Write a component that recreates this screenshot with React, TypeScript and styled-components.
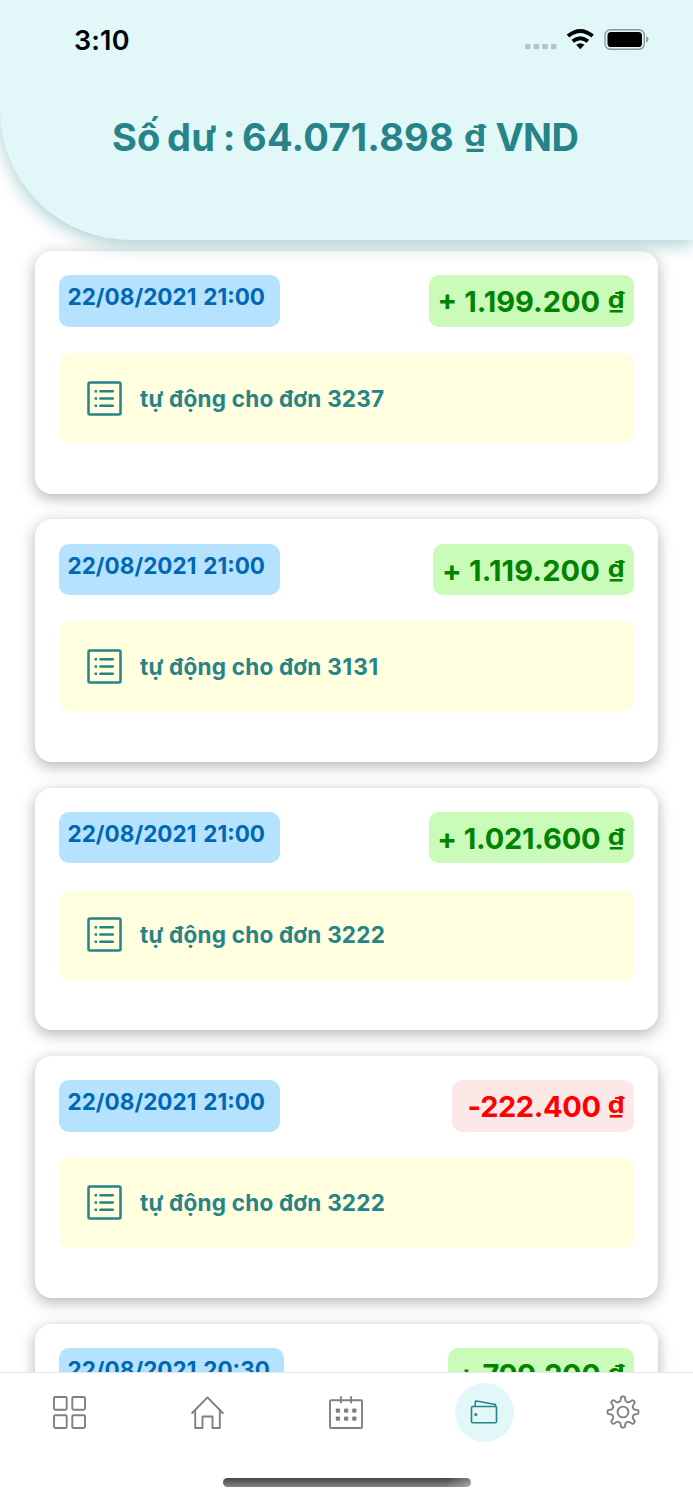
import React from 'react';
import styled, { createGlobalStyle } from 'styled-components';

const Global = createGlobalStyle`
  * { box-sizing: border-box; }
  body { margin: 0; background: #fff; font-family: Inter, "Liberation Sans", sans-serif; }
`;

const Screen = styled.div`
  width: 693px;
  height: 1500px;
  display: flex;
  flex-direction: column;
  overflow: hidden;
  background: #fff;
`;

const Header = styled.header`
  flex: none;
  height: 240px;
  background: #e1f7f8;
  border-bottom-left-radius: 130px;
  box-shadow: 0 5px 17px rgba(38, 132, 136, 0.38);
  z-index: 2;
`;

const StatusBar = styled.div`
  height: 79px;
  padding: 0 44px 0 74px;
  display: flex;
  align-items: center;
  justify-content: space-between;
`;

const Clock = styled.span`
  margin-top: 1px;
  font-size: 27px;
  font-weight: 600;
  color: #000;
  letter-spacing: 0.15px;
  white-space: nowrap;
`;

const Balance = styled.h1`
  margin: 33.5px 0 0 112px;
  font-size: 38px;
  line-height: 48px;
  font-weight: 700;
  color: #268488;
  white-space: nowrap;
  letter-spacing: 0.2px;
  word-spacing: -2.8px;
`;

const Dong = styled.span<{ $gap?: number }>`
  display: inline-block;
  margin: 0 ${(p) => p.$gap ?? 0}px;
  line-height: 1;
  letter-spacing: 0;
  transform-origin: 50% 0.8636em;
  transform: translateY(-0.135em) scale(0.92, 0.78);
`;

const Currency = styled.span`
  letter-spacing: -0.7px;
`;

const List = styled.main`
  flex: 1;
  min-height: 0;
  overflow: hidden;
  padding: 11.3px 35px 0;
  display: flex;
  flex-direction: column;
  gap: 25.8px;
`;

const Card = styled.article`
  flex: none;
  height: 242.4px;
  padding: 24.2px 24px 0;
  border-radius: 17px;
  background: #fff;
  box-shadow: 0 4px 15px rgba(0, 0, 0, 0.3);
`;

const CardTop = styled.div`
  display: flex;
  justify-content: space-between;
  height: 51.5px;
`;

const DateTag = styled.div`
  padding: 8px 14.5px 0 8.5px;
  border-radius: 10px;
  background: #b5e2ff;
  color: #0067b5;
  font-size: 22.5px;
  line-height: 28px;
  font-weight: 700;
  white-space: nowrap;
  word-spacing: 1.6px;
`;

const Amount = styled.div<{ $negative?: boolean; $tracking: number }>`
  padding-right: 8.5px;
  padding-left: ${(p) => (p.$negative ? '16px' : '8.5px')};
  border-radius: 10px;
  background: ${(p) => (p.$negative ? '#fde8e8' : '#cbfbb9')};
  color: ${(p) => (p.$negative ? '#ff0000' : '#008300')};
  font-size: 29px;
  line-height: 53px;
  font-weight: 700;
  white-space: nowrap;
  word-spacing: 0.2px;
  letter-spacing: ${(p) => p.$tracking}px;
`;

const Note = styled.div`
  display: flex;
  align-items: center;
  gap: 18px;
  height: 90px;
  margin-top: 26.3px;
  padding-left: 28px;
  border-radius: 10px;
  background: #fffede;
  color: #268488;
  font-size: 22.5px;
  font-weight: 700;
  letter-spacing: 0.22px;
  white-space: nowrap;
`;

const OrderNumber = styled.span<{ $tracking?: number }>`
  letter-spacing: ${(p) => p.$tracking ?? 0.22}px;
`;

const TabBar = styled.nav`
  flex: none;
  height: 128.5px;
  border-top: 1.5px solid #e6e6e6;
  background: #fff;
  display: flex;
  flex-direction: column;
  align-items: center;
  z-index: 3;
`;

const Tabs = styled.div`
  width: 692px;
  margin-right: 1px;
  height: 79.2px;
  display: grid;
  grid-template-columns: repeat(5, 1fr);
  place-items: center;
`;

const Tab = styled.div<{ $active?: boolean }>`
  width: 59px;
  height: 59px;
  border-radius: 50%;
  display: grid;
  place-items: center;
  color: ${(p) => (p.$active ? '#268488' : '#808080')};
  background: ${(p) => (p.$active ? '#e1f7f8' : 'transparent')};
`;

const HomeIndicator = styled.div`
  width: 248px;
  height: 8.3px;
  margin-top: 26.8px;
  border-radius: 5px;
  background:
    linear-gradient(90deg, transparent 90%, rgba(255, 255, 255, 0.3)),
    linear-gradient(#444, #858585);
`;

const StatusIcons = () => (
  <svg width="128" height="28" viewBox="521 26 128 28">
    <g fill="#b2c5c6">
      <rect x="525" y="44" width="5.5" height="5.3" rx="1.3" />
      <rect x="533.7" y="44" width="5.5" height="5.3" rx="1.3" />
      <rect x="542.3" y="44" width="5.5" height="5.3" rx="1.3" />
      <rect x="551" y="44" width="5.5" height="5.3" rx="1.3" />
    </g>
    <g fill="none" stroke="#000" strokeWidth="3.9">
      <path d="M568 36.1Q580.3 25.8 592.6 36.1" />
      <path d="M572.7 41.3Q580.3 35 587.9 41.3" />
    </g>
    <path d="M576.2 44.8Q580.3 41.6 584.4 44.8L580.3 49.2Z" fill="#000" />
    <rect x="605" y="29.7" width="39.3" height="19.6" rx="5.6" fill="none" stroke="#8b9999" strokeWidth="1.4" />
    <rect x="607.5" y="32" width="34.5" height="15" rx="3.6" fill="#000" />
    <path d="M646.2 36.2Q648.5 37 648.5 39.4T646.2 42.6Z" fill="#8b9999" />
  </svg>
);

const NoteIcon = () => (
  <svg width="35" height="35" viewBox="0 0 35 35" fill="none" stroke="currentColor" strokeWidth="2.5">
    <rect x="1.5" y="1.5" width="32" height="32" rx="1.5" />
    <path d="M13.4 10.2H25.8M13.4 17.5H25.8M13.4 24.8H25.8" strokeLinecap="round" />
    <path d="M7.6 10.2H10M7.6 17.5H10M7.6 24.8H10" />
  </svg>
);

const GridIcon = () => (
  <svg width="33" height="33" viewBox="0 0 33 33" fill="none" stroke="currentColor" strokeWidth="1.9">
    {[1, 19.3].map((x) => [1, 19.3].map((y) => <rect key={`${x}-${y}`} x={x} y={y} width="12.7" height="12.7" rx="1.2" />))}
  </svg>
);

const HouseIcon = () => (
  <svg width="33" height="33" viewBox="0 0 33 33" fill="none" stroke="currentColor" strokeWidth="1.9" strokeLinejoin="round" strokeLinecap="round">
    <path d="M1.2 17L16.5 1.4L31.8 17" />
    <path d="M4.2 14.5V32H11.5V20.5H21.5V32H28.8V14.5" />
  </svg>
);

const CalendarIcon = () => (
  <svg width="34" height="33" viewBox="0 0 34 33" fill="none" stroke="currentColor" strokeWidth="1.9">
    <rect x="1" y="4.2" width="32" height="27.8" rx="1" />
    <path d="M11.9 1V6.5M22.1 1V6.5" strokeLinecap="round" />
    <g fill="currentColor" stroke="none">
      {[6.8, 15, 23.2].map((x) => [12.5, 20.5].map((y) => <rect key={`${x}-${y}`} x={x} y={y} width="4.3" height="4.3" rx="1" />))}
    </g>
  </svg>
);

const WalletIcon = () => (
  <svg width="28" height="28" viewBox="0 0 28 28" fill="none" stroke="currentColor" strokeWidth="1.6" strokeLinejoin="round">
    <rect x="1.5" y="8.5" width="25" height="16.3" rx="1.3" />
    <path d="M5 8.3L5.4 3.6Q5.5 2.9 6.2 3L25.5 6.5V8.5" />
    <circle cx="5.8" cy="16.5" r="1.6" fill="currentColor" stroke="none" />
  </svg>
);

const GearIcon = () => (
  <svg width="34" height="34" viewBox="-17 -17 34 34" fill="none" stroke="currentColor" strokeWidth="1.9" strokeLinejoin="round">
    <circle r="5.4" />
    <path d={gearOutline()} />
  </svg>
);

/** Outline of an eight-toothed cog with rounded tips and valleys. */
function gearOutline(): string {
  const at = (r: number, deg: number) => {
    const a = (deg * Math.PI) / 180;
    return `${(r * Math.sin(a)).toFixed(2)} ${(-r * Math.cos(a)).toFixed(2)}`;
  };
  let d = `M${at(14.2, -8.5)}`;
  for (let i = 0; i < 8; i++) {
    const c = i * 45;
    d += `Q${at(15.5, c - 7.5)} ${at(15.5, c - 3)}L${at(15.5, c + 3)}Q${at(15.5, c + 7.5)} ${at(14.2, c + 8.5)}`;
    d += `C${at(12, c + 10)} ${at(10.4, c + 16)} ${at(11, c + 22.5)}`;
    d += `C${at(10.4, c + 29)} ${at(12, c + 35)} ${at(14.2, c + 36.5)}`;
  }
  return `${d}Z`;
}

type Entry = {
  date: string;
  amount: string;
  tracking: number;
  order: string;
  orderTracking?: number;
  negative?: boolean;
};

const entries: Entry[] = [
  { date: '22/08/2021 21:00', amount: '+ 1.199.200', tracking: 0, order: '3237' },
  { date: '22/08/2021 21:00', amount: '+ 1.119.200', tracking: 0.15, order: '3131', orderTracking: 0.9 },
  { date: '22/08/2021 21:00', amount: '+ 1.021.600', tracking: -0.2, order: '3222' },
  { date: '22/08/2021 21:00', amount: '-222.400', tracking: -0.4, order: '3222', negative: true },
  { date: '22/08/2021 20:30', amount: '+ 799.200', tracking: -0.35, order: '3222' },
];

export default function App() {
  return (
    <Screen>
      <Global />
      <Header>
        <StatusBar>
          <Clock>3:10</Clock>
          <StatusIcons />
        </StatusBar>
        <Balance>Số dư : 64.071.898 <Dong $gap={2.4}>₫</Dong> <Currency>VND</Currency></Balance>
      </Header>
      <List>
        {entries.map((e, i) => (
          <Card key={i}>
            <CardTop>
              <DateTag>{e.date}</DateTag>
              <Amount $negative={e.negative} $tracking={e.tracking}>{e.amount} <Dong>₫</Dong></Amount>
            </CardTop>
            <Note>
              <NoteIcon />
              <span>tự động cho đơn <OrderNumber $tracking={e.orderTracking}>{e.order}</OrderNumber></span>
            </Note>
          </Card>
        ))}
      </List>
      <TabBar>
        <Tabs>
          <Tab><GridIcon /></Tab>
          <Tab><HouseIcon /></Tab>
          <Tab><CalendarIcon /></Tab>
          <Tab $active><WalletIcon /></Tab>
          <Tab><GearIcon /></Tab>
        </Tabs>
        <HomeIndicator />
      </TabBar>
    </Screen>
  );
}
